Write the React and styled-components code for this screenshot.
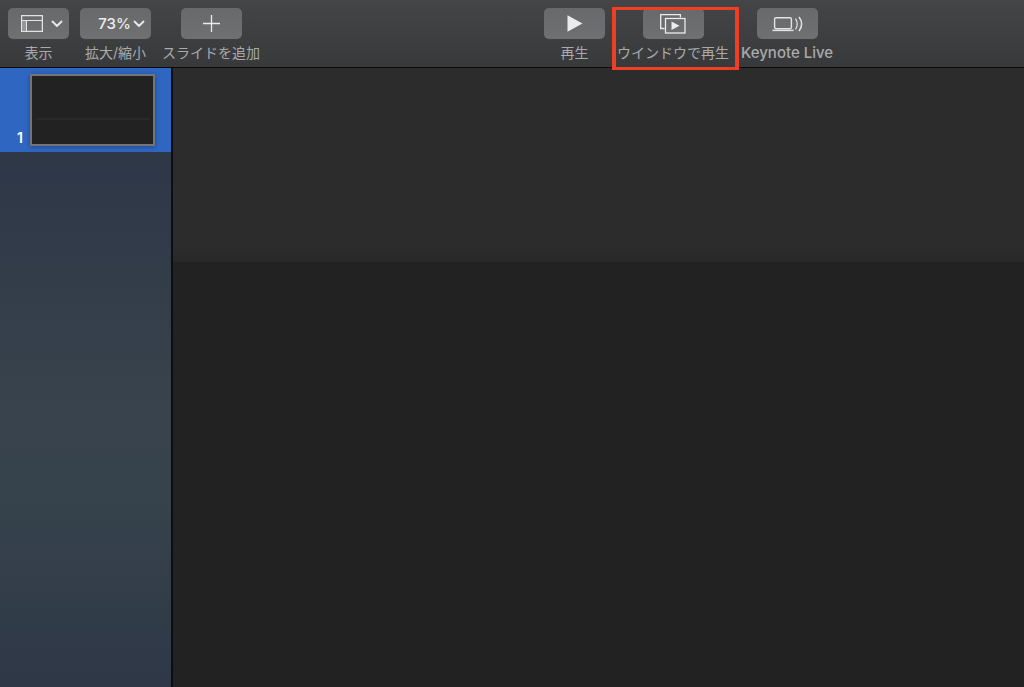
import React, { useState } from 'react';
import styled, { createGlobalStyle } from 'styled-components';

export default function App() {
  const [slide, setSlide] = useState(1);

  return (
    <>
      <GlobalStyle />
      <Window>
        <Toolbar>
          <Group>
            <Tool id="view" label="表示" variant="menu">
              <LayoutIcon />
              <Chevron />
            </Tool>
            <Tool id="zoom" label="拡大/縮小" variant="value">
              <span>73%</span>
              <Chevron />
            </Tool>
            <Tool id="add" label="スライドを追加">
              <PlusIcon />
            </Tool>
          </Group>
          <Group>
            <Tool id="play" label="再生">
              <PlayIcon />
            </Tool>
            <Tool id="play-window" label="ウインドウで再生" highlighted>
              <WindowPlayIcon />
            </Tool>
            <Tool id="live" label="Keynote Live" latin>
              <LiveIcon />
            </Tool>
          </Group>
        </Toolbar>
        <Body>
          <Navigator>
            <SlideRow $active={slide === 1} onClick={() => setSlide(1)}>
              <SlideNumber>1</SlideNumber>
              <Thumbnail>
                <ThumbnailRule />
              </Thumbnail>
            </SlideRow>
          </Navigator>
          <Canvas>
            <CanvasTop />
            <Slide />
          </Canvas>
        </Body>
      </Window>
    </>
  );
}

const Tool = ({ id, label, variant = 'icon', latin, highlighted, children }) => (
  <ToolItem>
    <ToolButton id={id} type="button" $variant={variant}>{children}</ToolButton>
    <ToolLabel htmlFor={id} $latin={latin}>{label}</ToolLabel>
    {highlighted && <Highlight />}
  </ToolItem>
);

const LayoutIcon = () => (
  <svg width="22" height="17" viewBox="0 0 22 17" fill="none" stroke="#e4e4e5">
    <rect x="0.6" y="0.6" width="20.8" height="15.8" strokeWidth="1.3" />
    <path d="M0 5.5H22M5.5 5.5V16.5" />
    <rect x="1" y="6" width="4" height="10" fill="#98989a" stroke="none" />
  </svg>
);

const Chevron = () => (
  <svg width="12" height="8" viewBox="0 0 12 8" fill="none" stroke="#e8e8e8" strokeWidth="1.9" strokeLinecap="round" strokeLinejoin="round">
    <path d="M1.5 1.5L6 6L10.5 1.5" />
  </svg>
);

const PlusIcon = () => (
  <svg width="17" height="17" viewBox="0 0 17 17" stroke="#ececec" strokeWidth="1.3">
    <path d="M8.5 0V17M0 8.5H17" />
  </svg>
);

const PlayIcon = () => (
  <svg width="16" height="17" viewBox="0 0 16 17" fill="#ececec">
    <path d="M0.5 0.3L15.5 8.5L0.5 16.7Z" />
  </svg>
);

const WindowPlayIcon = () => (
  <svg width="26" height="20" viewBox="0 0 26 20" fill="none" stroke="#ececec" strokeWidth="1.3">
    <path d="M4.5 14.5H0.7V0.7H20.4V3.5" />
    <rect x="5.5" y="4.5" width="19.5" height="14.5" />
    <path d="M11.5 7.5L19.5 11.7L11.5 16Z" fill="#ececec" stroke="none" />
  </svg>
);

const LiveIcon = () => (
  <svg width="31" height="16" viewBox="0 0 31 16" fill="none" stroke="#e4e4e5" strokeWidth="1.4">
    <rect x="2.6" y="1.7" width="16.8" height="11" rx="1.4" />
    <path d="M0.5 14.4H21.5" strokeWidth="1.5" />
    <path d="M23.5 2.6C25.5 5.8 25.5 10.2 23.5 13.4" strokeWidth="1.2" />
    <path d="M27 1C30.5 5.2 30.5 10.8 27 15" strokeWidth="1.5" />
  </svg>
);

const GlobalStyle = createGlobalStyle`
  * {
    box-sizing: border-box;
  }

  body {
    margin: 0;
    background: #222222;
    font-family: Inter, "Noto Sans CJK JP", sans-serif;
  }
`;

const Window = styled.div`
  display: flex;
  flex-direction: column;
  min-height: 100vh;
`;

const Toolbar = styled.header`
  display: flex;
  gap: 284px;
  padding: 8px 8px 5px;
  background: linear-gradient(#444547, #38393b);
  border-bottom: 1px solid #0c0c0d;
`;

const Group = styled.div`
  display: flex;
  gap: 11px;

  & + & {
    gap: 12px;
  }
`;

const ToolItem = styled.div`
  position: relative;
  display: flex;
  flex-direction: column;
  align-items: center;
  gap: 4px;
`;

const buttonPadding = {
  icon: '0',
  menu: '0 0 0 7px',
  value: '0 0 0 12px',
};

const ToolButton = styled.button`
  display: flex;
  justify-content: center;
  align-items: center;
  gap: ${({ $variant }) => $variant === 'value' ? '2px' : '8px'};
  width: ${({ $variant }) => $variant === 'value' ? '71px' : '61px'};
  height: 31px;
  padding: ${({ $variant }) => buttonPadding[$variant]};
  border: none;
  border-radius: 5px;
  background: linear-gradient(#68696b, #6f7072);
  color: #ececec;
  font-family: inherit;
  font-size: 15px;
  font-weight: 500;

  svg {
    flex: none;
  }

  &:active {
    background: #88898b;
  }
`;

const ToolLabel = styled.label`
  color: #a9aaac;
  font-size: ${({ $latin }) => $latin ? '15px' : '14px'};
  font-weight: ${({ $latin }) => $latin ? 500 : 400};
  line-height: 19px;
  white-space: nowrap;
`;

const Highlight = styled.div`
  position: absolute;
  inset: -1px -10px -8px -5px;
  border: 4px solid #ee3e23;
  border-width: 3px 4px;
  pointer-events: none;
`;

const Body = styled.main`
  display: flex;
  flex: 1;
`;

const Navigator = styled.nav`
  flex: none;
  width: 173px;
  border-right: 2px solid #0d0e0f;
  background: linear-gradient(#2d3747, #2f3948 20%, #38434d 55%, #36424c 70%, #2e3847);
`;

const SlideRow = styled.button`
  display: flex;
  align-items: flex-end;
  gap: 7px;
  width: 100%;
  padding: 6px 16px 6px 0;
  border: none;
  background: ${({ $active }) => $active ? '#2f66c1' : 'transparent'};
  font-family: inherit;
`;

const SlideNumber = styled.span`
  flex: 1;
  color: #ffffff;
  font-size: 14px;
  font-weight: 600;
  line-height: 16px;
  text-align: right;
`;

const Thumbnail = styled.div`
  width: 125px;
  height: 72px;
  padding: 42px 4px 0;
  border: 2px solid #737478;
  background: #222222;
  box-shadow: 0 1px 4px rgba(0, 0, 0, 0.3);
`;

const ThumbnailRule = styled.div`
  height: 2px;
  background: #2a2a2a;
`;

const Canvas = styled.section`
  display: flex;
  flex: 1;
  flex-direction: column;
`;

const CanvasTop = styled.div`
  height: 194px;
  background: linear-gradient(#2c2c2c 92%, #272727);
`;

const Slide = styled.div`
  flex: 1;
  background: #222222;
`;
